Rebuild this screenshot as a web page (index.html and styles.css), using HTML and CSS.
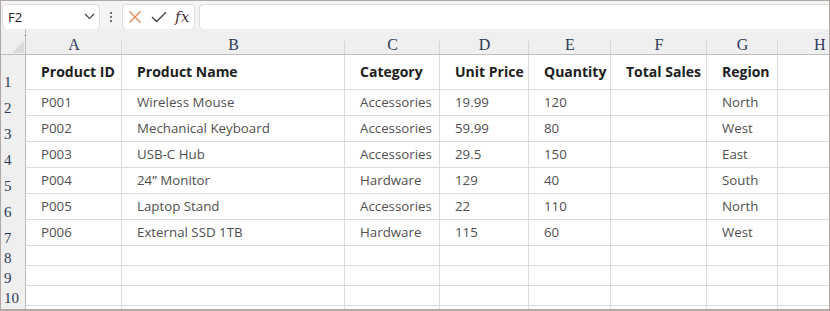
FILE: index.html
```html
<!DOCTYPE html>
<html>
<head>
<meta charset="utf-8">
<link rel="stylesheet" href="styles.css">
</head>
<body>
<div class="frame">
  <div class="toolbar">
    <div class="namebox">
      <span class="name">F2</span>
      <svg class="chev" width="11" height="7" viewBox="0 0 11 7"><path d="M1 1 L5.5 5.5 L10 1" fill="none" stroke="#444" stroke-width="1.2"/></svg>
    </div>
    <div class="dots"><span></span><span></span><span></span></div>
    <div class="fxbox">
      <svg width="14" height="14" viewBox="0 0 14 14"><path d="M1.5 1.5 L12.5 12.5 M12.5 1.5 L1.5 12.5" stroke="#e3865a" stroke-width="1.4" fill="none"/></svg>
      <svg width="16" height="12" viewBox="0 0 16 12"><path d="M1 6 L5.5 10.5 L15 1.2" stroke="#444" stroke-width="1.3" fill="none"/></svg>
      <span class="fx">fx</span>
    </div>
    <div class="formula"></div>
  </div>
  <div class="sheet">
    <div class="corner"><span class="tri"></span><span class="dot"></span></div>
    <div class="ch">A</div><div class="ch">B</div><div class="ch">C</div><div class="ch">D</div><div class="ch">E</div><div class="ch">F</div><div class="ch">G</div><div class="ch last">H</div>

    <div class="rh">1</div>
    <div class="c b">Product ID</div><div class="c b">Product Name</div><div class="c b">Category</div><div class="c b">Unit Price</div><div class="c b">Quantity</div><div class="c b">Total Sales</div><div class="c b">Region</div><div class="c"></div>

    <div class="rh">2</div>
    <div class="c">P001</div><div class="c">Wireless Mouse</div><div class="c">Accessories</div><div class="c">19.99</div><div class="c">120</div><div class="c"></div><div class="c">North</div><div class="c"></div>

    <div class="rh">3</div>
    <div class="c">P002</div><div class="c">Mechanical Keyboard</div><div class="c">Accessories</div><div class="c">59.99</div><div class="c">80</div><div class="c"></div><div class="c">West</div><div class="c"></div>

    <div class="rh">4</div>
    <div class="c">P003</div><div class="c">USB-C Hub</div><div class="c">Accessories</div><div class="c">29.5</div><div class="c">150</div><div class="c"></div><div class="c">East</div><div class="c"></div>

    <div class="rh">5</div>
    <div class="c">P004</div><div class="c">24” Monitor</div><div class="c">Hardware</div><div class="c">129</div><div class="c">40</div><div class="c"></div><div class="c">South</div><div class="c"></div>

    <div class="rh">6</div>
    <div class="c">P005</div><div class="c">Laptop Stand</div><div class="c">Accessories</div><div class="c">22</div><div class="c">110</div><div class="c"></div><div class="c">North</div><div class="c"></div>

    <div class="rh">7</div>
    <div class="c">P006</div><div class="c">External SSD 1TB</div><div class="c">Hardware</div><div class="c">115</div><div class="c">60</div><div class="c"></div><div class="c">West</div><div class="c"></div>

    <div class="rh">8</div>
    <div class="c"></div><div class="c"></div><div class="c"></div><div class="c"></div><div class="c"></div><div class="c"></div><div class="c"></div><div class="c"></div>
    <div class="rh">9</div>
    <div class="c"></div><div class="c"></div><div class="c"></div><div class="c"></div><div class="c"></div><div class="c"></div><div class="c"></div><div class="c"></div>
    <div class="rh">10</div>
    <div class="c"></div><div class="c"></div><div class="c"></div><div class="c"></div><div class="c"></div><div class="c"></div><div class="c"></div><div class="c"></div>
    <div class="rh"></div>
    <div class="c"></div><div class="c"></div><div class="c"></div><div class="c"></div><div class="c"></div><div class="c"></div><div class="c"></div><div class="c"></div>
  </div>
</div>
</body>
</html>
```

FILE: styles.css
```css
html, body {
  margin: 0;
  padding: 0;
  background: #ffffff;
}

.frame {
  width: 830px;
  height: 311px;
  box-sizing: border-box;
  border: 1px solid #b3a8a6;
  border-bottom-width: 2px;
  overflow: hidden;
  background: #f4f4f4;
}

.toolbar {
  height: 28px;
  display: flex;
  align-items: center;
  padding-left: 1px;
  box-sizing: border-box;
}

.namebox {
  width: 98px;
  height: 26px;
  box-sizing: border-box;
  margin-top: 3px;
  background: #fff;
  border: 1px solid #dcdcdc;
  border-radius: 4px;
  display: flex;
  align-items: center;
  justify-content: space-between;
  padding: 0 4px 0 5px;
}

.name {
  font-family: "Open Sans", "Noto Sans", sans-serif;
  font-size: 13px;
  color: #222;
}

.dots {
  width: 22px;
  display: flex;
  flex-direction: column;
  align-items: center;
  gap: 2px;
  margin-top: 3px;
}

.dots span {
  width: 2px;
  height: 2px;
  background: #444;
  border-radius: 1px;
}

.fxbox {
  width: 73px;
  height: 26px;
  box-sizing: border-box;
  margin-top: 3px;
  background: #fff;
  border: 1px solid #dcdcdc;
  border-radius: 4px;
  display: flex;
  align-items: center;
  gap: 9px;
  padding-left: 5px;
}

.fx {
  font-family: "DejaVu Serif", "Liberation Serif", serif;
  font-style: italic;
  font-size: 15px;
  color: #4a3040;
  letter-spacing: 0.5px;
  margin-left: -1px;
}

.formula {
  flex: 1;
  height: 26px;
  box-sizing: border-box;
  margin-top: 3px;
  margin-left: 4px;
  background: #fff;
  border: 1px solid #dcdcdc;
  border-right: none;
  border-radius: 4px 0 0 4px;
}

.sheet {
  display: grid;
  grid-template-columns: 25px 96px 223px 95px 89px 82px 96px 71px 82px;
  grid-template-rows: 26px 35px repeat(6, 26px) repeat(3, 20px) 20px;
  background: #fff;
}

.sheet > div {
  box-sizing: border-box;
}

.corner {
  position: relative;
  background: #eeefee;
  border-right: 1px solid #bdbdbd;
  border-bottom: 1px solid #bdbdbd;
}

.tri {
  position: absolute;
  right: 1px;
  bottom: 1px;
  width: 0;
  height: 0;
  border-left: 12px solid transparent;
  border-bottom: 12px solid #dadada;
}

.dot {
  position: absolute;
  right: -1px;
  top: 6px;
  width: 1px;
  height: 1px;
  background: #555;
}

.ch {
  position: relative;
  background: #eeefee;
  border-bottom: 1px solid #bdbdbd;
  font-family: "Liberation Serif", "DejaVu Serif", serif;
  font-size: 16px;
  color: #2c3a58;
  display: flex;
  align-items: center;
  justify-content: center;
  padding-top: 6px;
}

.ch::after {
  content: "";
  position: absolute;
  right: 0;
  bottom: 0;
  width: 1px;
  height: 13px;
  background: #d6d6d6;
}

.ch.last::after {
  display: none;
}

.ch.last {
  justify-content: flex-start;
  padding-left: 36px;
}

.rh {
  background: #eeefee;
  border-right: 1px solid #bdbdbd;
  font-family: "Liberation Serif", "DejaVu Serif", serif;
  font-size: 15px;
  color: #2c3a58;
  display: flex;
  align-items: flex-end;
  padding-left: 3px;
  line-height: 1;
  padding-bottom: 0;
}

.c {
  border-right: 1px solid #dcdcdc;
  border-bottom: 1px solid #dcdcdc;
  font-family: "Open Sans", "Noto Sans", sans-serif;
  font-size: 13.3px;
  color: #505050;
  display: flex;
  align-items: center;
  padding-left: 15px;
  padding-bottom: 2px;
  white-space: nowrap;
  overflow: hidden;
}

.c.b {
  font-weight: 700;
  font-size: 14px;
  color: #202020;
}
```
